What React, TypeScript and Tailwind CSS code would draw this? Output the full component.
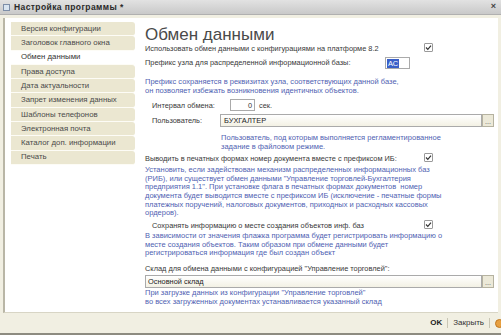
import React from 'react';

const TABS = [
  'Версия конфигурации',
  'Заголовок главного окна',
  'Обмен данными',
  'Права доступа',
  'Дата актуальности',
  'Запрет изменения данных',
  'Шаблоны телефонов',
  'Электронная почта',
  'Каталог доп. информации',
  'Печать',
];

function Check() {
  return (
    <span className="inline-flex items-center justify-center w-[9px] h-[9px] border border-[#9a9a9a] bg-white rounded-[1px]">
      <svg width="7" height="7" viewBox="0 0 7 7">
        <path d="M1 3.5 L2.8 5.3 L6 1.6" stroke="#333" strokeWidth="1.2" fill="none" />
      </svg>
    </span>
  );
}

function Dots() {
  return (
    <span className="w-[12px] h-[13px] border border-[#b5b2a0] bg-[#ece9d8] flex items-end justify-center text-[7px] leading-[8px] text-[#555]">
      ...
    </span>
  );
}

function Blue({ children, className = '' }: { children: React.ReactNode; className?: string }) {
  return <div className={`text-[#4f62b2] text-[7.5px] leading-[8.7px] ${className}`}>{children}</div>;
}

export default function App() {
  return (
    <div className="w-[501px] h-[335px] flex flex-col bg-[#f1efe2] text-[#383838] overflow-hidden" style={{ fontFamily: '"Liberation Sans", Arial, sans-serif' }}>
      {/* заголовок окна */}
      <div className="h-[15px] shrink-0 flex items-center bg-gradient-to-b from-[#e2e2e2] to-[#c9c9c9] border-b border-[#b0b0b0] px-[3px]">
        <span className="w-[7px] h-[7px] bg-[#d8e4f0] border border-[#7d8ea8] mr-[4px]" />
        <span className="text-[8.5px] font-bold text-[#2a2a2a] tracking-[0.4px]">Настройка программы *</span>
        <span className="ml-auto text-[9px] font-bold text-[#444] pr-[2px]">×</span>
      </div>

      <div className="flex-1 min-h-0 flex pl-[3px] pr-[3px] pt-[3px]">
        <div className="flex-1 flex bg-white border-l-2 border-[#b9b6a6] border-b border-b-[#d8d5c5] overflow-hidden">
          {/* вкладки */}
          <div className="w-[130px] pt-[4px] pl-[6px] flex flex-col">
            {TABS.map((t) => (
              <div
                key={t}
                className={`h-[14.3px] flex items-center pl-[10px] text-[7.8px] border-b border-[#fdfcf6] rounded-r-[3px] ${
                  t === 'Обмен данными' ? 'bg-white text-[#333]' : 'bg-[#ebe7d1] text-[#4a4a4a]'
                }`}
              >
                {t}
              </div>
            ))}
          </div>

          {/* содержимое */}
          <div className="flex-1 pl-[10px] pr-[4px] pt-[9px] text-[7.4px]">
            <div className="text-[17px] leading-[16px] text-[#4a4a4a]">Обмен данными</div>

            <div className="h-[12px] flex items-center">
              <span>Использовать обмен данными с конфигурациями на платформе 8.2</span>
              <span className="ml-auto mr-[61px]"><Check /></span>
            </div>

            <div className="h-[16px] flex items-center">
              <span className="w-[240px]">Префикс узла для распределенной информационной базы:</span>
              <span className="w-[25px] h-[12px] border border-[#aaa] bg-white flex items-center pl-[1px]">
                <span className="bg-[#3a5fc8] text-white px-[1px] leading-[9px]">АС</span>
              </span>
            </div>

            <Blue className="mt-[7px]">
              Префикс сохраняется в реквизитах узла, соответствующих данной базе,
              <br />
              он позволяет избежать возникновения идентичных объектов.
            </Blue>

            <div className="h-[14px] flex items-center mt-[3px] pl-[7px]">
              <span className="w-[78px]">Интервал обмена:</span>
              <span className="w-[25px] h-[12px] border border-[#aaa] bg-white flex items-center justify-end pr-[2px]">0</span>
              <span className="ml-[4px]">сек.</span>
            </div>

            <div className="h-[15px] flex items-center mt-[1px] pl-[7px]">
              <span className="w-[68px]">Пользователь:</span>
              <span className="flex-1 h-[13px] border border-[#aaa] bg-gradient-to-b from-white to-[#f3f1e4] flex items-center pl-[3px] text-[#222]">
                БУХГАЛТЕР
              </span>
              <Dots />
            </div>

            <Blue className="pl-[76px] mt-[6px]">
              Пользователь, под которым выполняется регламентированное
              <br />
              задание в файловом режиме.
            </Blue>

            <div className="h-[12px] flex items-center mt-[1px]">
              <span>Выводить в печатных формах номер документа вместе с префиксом ИБ:</span>
              <span className="ml-auto mr-[61px]"><Check /></span>
            </div>

            <Blue className="mt-[1px]">
              Установить, если задействован механизм распределенных информационных баз
              <br />
              (РИБ), или существует обмен данными "Управление торговлей-Бухгалтерия
              <br />
              предприятия 1.1". При установке флага в печатных формах документов&nbsp; номер
              <br />
              документа будет выводится вместе с префиксом ИБ (исключение - печатные формы
              <br />
              платежных поручений, налоговых документов, приходных и расходных кассовых
              <br />
              ордеров).
            </Blue>

            <div className="h-[12px] flex items-center mt-[2px] pl-[7px]">
              <span>Сохранять информацию о месте создания объектов инф. баз</span>
              <span className="ml-auto mr-[61px]"><Check /></span>
            </div>

            <Blue className="leading-[8.3px]">
              В зависимости от значения флажка программа будет регистрировать информацию о
              <br />
              месте создания объектов. Таким образом при обмене данными будет
              <br />
              регистрироваться информация где был создан объект
            </Blue>

            <div className="h-[12px] flex items-center mt-[4px]">
              Склад для обмена данными с конфигурацией "Управление торговлей":
            </div>

            <div className="h-[14px] flex items-center">
              <span className="flex-1 h-[13px] border border-[#aaa] bg-gradient-to-b from-white to-[#f3f1e4] flex items-center pl-[2px] text-[#222]">
                Основной склад
              </span>
              <Dots />
            </div>

            <Blue className="mt-[1px]">
              При загрузке данных из конфигурации "Управление торговлей"
              <br />
              во всех загруженных документах устанавливается указанный склад
            </Blue>
          </div>
        </div>
      </div>

      {/* нижняя панель */}
      <div className="h-[22px] shrink-0 flex items-center justify-end border-b-2 border-[#8d8b80]">
        <span className="text-[8px] font-bold text-[#222]">OK</span>
        <span className="mx-[5px] h-[10px] w-px bg-[#c8c5b4]" />
        <span className="text-[8px] text-[#333]">Закрыть</span>
        <span className="mx-[5px] h-[10px] w-px bg-[#c8c5b4]" />
        <span className="w-[9px] h-[9px] rounded-full bg-[#e8a040] border border-[#c07820] -mr-[3px]" />
      </div>
    </div>
  );
}
